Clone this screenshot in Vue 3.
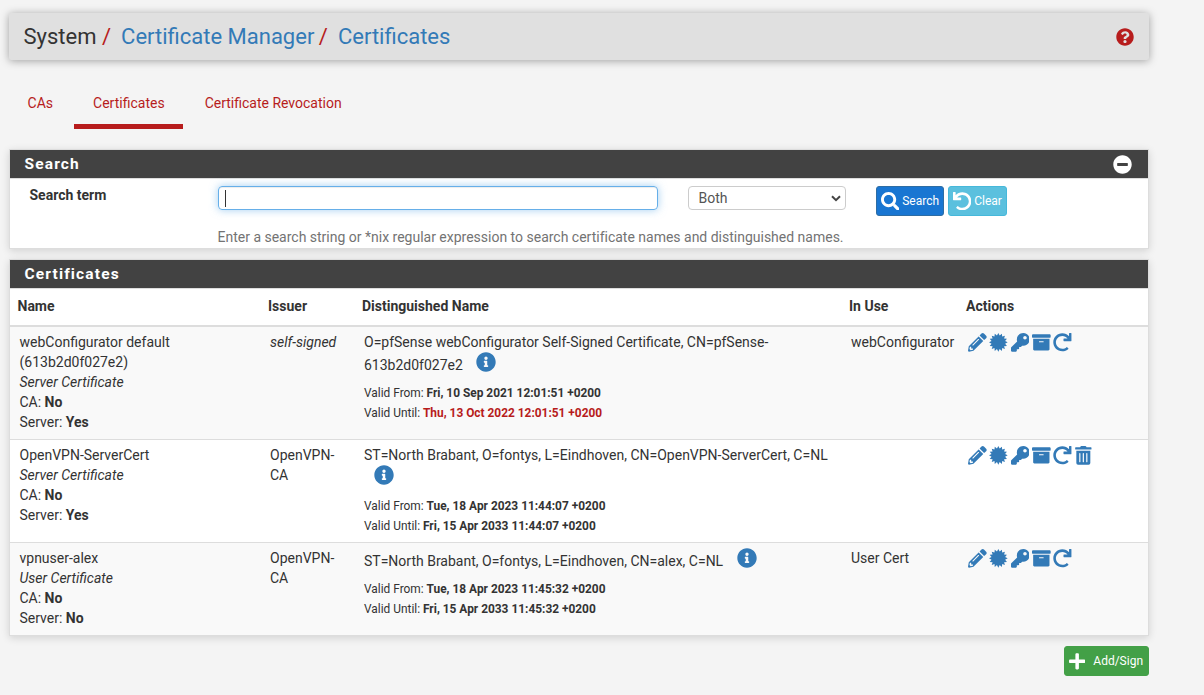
<script setup>
const star = Array.from({ length: 32 }, (_, i) => {
  const r = i % 2 ? 190 : 256
  const a = (i * Math.PI) / 16
  return `${(256 + r * Math.sin(a)).toFixed(1)} ${(256 - r * Math.cos(a)).toFixed(1)}`
}).join('L')

const undo =
  'M212.333 224.333H12c-6.627 0-12-5.373-12-12V12C0 5.373 5.373 0 12 0h48c6.627 0 12 5.373 12 12v78.112C117.773 39.279 184.26 7.47 258.175 8.007c136.906.994 246.448 111.623 246.157 248.532C504.041 393.258 393.12 504 256.333 504c-64.089 0-122.496-24.313-166.51-64.215-5.099-4.622-5.334-12.554-.467-17.42l33.967-33.967c4.474-4.474 11.662-4.717 16.401-.525C170.76 415.336 211.58 432 256.333 432c97.268 0 176-78.716 176-176 0-97.267-78.716-176-176-176-58.496 0-110.28 28.476-142.274 72.333h98.274c6.627 0 12 5.373 12 12v48c0 6.627-5.373 12-12 12z'

const icons = {
  pencil:
    'M497.9 142.1l-46.1 46.1c-4.7 4.7-12.3 4.7-17 0l-111-111c-4.7-4.7-4.7-12.3 0-17l46.1-46.1c18.7-18.7 49.1-18.7 67.9 0l60.1 60.1c18.8 18.7 18.8 49.1 0 67.9zM284.2 99.8L21.6 362.4.4 483.9c-2.9 16.4 11.4 30.6 27.8 27.8l121.5-21.3 262.6-262.6c4.7-4.7 4.7-12.3 0-17l-111-111c-4.8-4.7-12.4-4.7-17.1 0zM124.1 339.9c-5.5-5.5-5.5-14.3 0-19.8l154-154c5.5-5.5 14.3-5.5 19.8 0s5.5 14.3 0 19.8l-154 154c-5.5 5.5-14.3 5.5-19.8 0zM88 424h48v36.3l-64.5 11.3-31.1-31.1L51.7 376H88v48z',
  certificate: `M${star}Z`,
  key: 'M512 176.001C512 273.203 433.202 352 336 352c-11.22 0-22.19-1.062-32.827-3.069l-24.012 27.014A23.999 23.999 0 0 1 261.223 384H224v40c0 13.255-10.745 24-24 24h-40v40c0 13.255-10.745 24-24 24H24c-13.255 0-24-10.745-24-24v-78.059c0-6.365 2.529-12.47 7.029-16.971l161.802-161.802C163.108 213.814 160 195.271 160 176 160 78.798 238.797.001 335.999 0 433.488-.001 512 78.511 512 176.001zM336 128c0 26.51 21.49 48 48 48s48-21.49 48-48-21.49-48-48-48-48 21.49-48 48z',
  archive:
    'M32 448c0 17.7 14.3 32 32 32h384c17.7 0 32-14.3 32-32V160H32v288zm160-212c0-6.6 5.4-12 12-12h104c6.6 0 12 5.4 12 12v8c0 6.6-5.4 12-12 12H204c-6.6 0-12-5.4-12-12v-8zM480 32H32C14.3 32 0 46.3 0 64v48c0 8.8 7.2 16 16 16h480c8.8 0 16-7.2 16-16V64c0-17.7-14.3-32-32-32z',
  redo: undo,
  trash:
    'M64 464a48 48 0 0 0 48 48h288a48 48 0 0 0 48-48V128H64zm272-256a16 16 0 0 1 32 0v224a16 16 0 0 1-32 0zm-96 0a16 16 0 0 1 32 0v224a16 16 0 0 1-32 0zm-96 0a16 16 0 0 1 32 0v224a16 16 0 0 1-32 0zM464 32H344l-9.4-18.7A24 24 0 0 0 313.1 0H198.8a23.72 23.72 0 0 0-21.4 13.3L168 32H48A16 16 0 0 0 32 48v32a16 16 0 0 0 16 16h416a16 16 0 0 0 16-16V48a16 16 0 0 0-16-16z',
}
const info =
  'M256 8C119.043 8 8 119.083 8 256c0 136.997 111.043 248 248 248s248-111.003 248-248C504 119.083 392.957 8 256 8zm0 110c23.196 0 42 18.804 42 42s-18.804 42-42 42-42-18.804-42-42 18.804-42 42-42zm56 254c0 6.627-5.373 12-12 12h-88c-6.627 0-12-5.373-12-12v-24c0-6.627 5.373-12 12-12h12v-64h-12c-6.627 0-12-5.373-12-12v-24c0-6.627 5.373-12 12-12h64c6.627 0 12 5.373 12 12v100h12c6.627 0 12 5.373 12 12v24z'

const base = ['pencil', 'certificate', 'key', 'archive', 'redo']
const rows = [
  {
    name: ['webConfigurator default', '(613b2d0f027e2)'],
    type: 'Server Certificate', server: 'Yes',
    issuer: ['self-signed'], self: true,
    dn: 'O=pfSense webConfigurator Self-Signed Certificate, CN=pfSense-', tail: '613b2d0f027e2',
    from: 'Fri, 10 Sep 2021 12:01:51 +0200', until: 'Thu, 13 Oct 2022 12:01:51 +0200', expired: true,
    use: 'webConfigurator', actions: base,
  },
  {
    name: ['OpenVPN-ServerCert'],
    type: 'Server Certificate', server: 'Yes',
    issuer: ['OpenVPN-', 'CA'],
    dn: 'ST=North Brabant, O=fontys, L=Eindhoven, CN=OpenVPN-ServerCert, C=NL', tail: '',
    from: 'Tue, 18 Apr 2023 11:44:07 +0200', until: 'Fri, 15 Apr 2033 11:44:07 +0200',
    use: '', actions: [...base, 'trash'],
  },
  {
    name: ['vpnuser-alex'],
    type: 'User Certificate', server: 'No',
    issuer: ['OpenVPN-', 'CA'],
    dn: '', tail: 'ST=North Brabant, O=fontys, L=Eindhoven, CN=alex, C=NL',
    from: 'Tue, 18 Apr 2023 11:45:32 +0200', until: 'Fri, 15 Apr 2033 11:45:32 +0200',
    use: 'User Cert', actions: base,
  },
]
</script>

<template>
  <main class="page">
    <header class="crumbs">
      <span>System</span><i class="s1">/</i><a>Certificate Manager</a><i class="s2">/</i><a>Certificates</a>
      <svg class="help" viewBox="0 0 512 512"><path d="M504 256c0 136.997-111.043 248-248 248S8 392.997 8 256C8 119.083 119.043 8 256 8s248 111.083 248 248zM262.655 90c-54.497 0-89.255 22.957-116.549 63.758-3.536 5.286-2.353 12.415 2.715 16.258l34.699 26.31c5.205 3.947 12.621 3.008 16.665-2.122 17.864-22.658 30.113-35.797 57.303-35.797 20.429 0 45.698 13.148 45.698 32.958 0 14.976-12.363 22.667-32.534 33.976C247.128 238.528 216 254.941 216 296v4c0 6.627 5.373 12 12 12h56c6.627 0 12-5.373 12-12v-1.333c0-28.462 83.186-29.647 83.186-106.667 0-58.002-60.165-102-116.531-102zM256 338c-25.365 0-46 20.635-46 46 0 25.364 20.635 46 46 46s46-20.636 46-46c0-25.365-20.635-46-46-46z" /></svg>
    </header>

    <nav class="tabs">
      <a>CAs</a><a class="active">Certificates</a><a>Certificate Revocation</a>
    </nav>

    <section class="panel search">
      <h2>
        Search
        <svg viewBox="0 0 512 512"><path d="M256 8C119 8 8 119 8 256s111 248 248 248 248-111 248-248S393 8 256 8zM124 296c-6.6 0-12-5.4-12-12v-56c0-6.6 5.4-12 12-12h264c6.6 0 12 5.4 12 12v56c0 6.6-5.4 12-12 12H124z" /></svg>
      </h2>
      <div class="form">
        <label>Search term</label>
        <div class="field"><span class="caret"></span></div>
        <div class="select">
          <span>Both</span>
          <svg viewBox="0 0 10 7"><path d="M1 1.2 5 5.2 9 1.2" /></svg>
        </div>
        <button class="btn blue">
          <svg viewBox="0 0 512 512"><path d="M505 442.7L405.3 343c-4.5-4.5-10.6-7-17-7H372c27.6-35.3 44-79.7 44-128C416 93.1 322.9 0 208 0S0 93.1 0 208s93.1 208 208 208c48.3 0 92.7-16.4 128-44v16.3c0 6.4 2.5 12.5 7 17l99.7 99.7c9.4 9.4 24.6 9.4 33.9 0l28.3-28.3c9.4-9.4 9.4-24.6.1-34zM208 336c-70.7 0-128-57.2-128-128 0-70.7 57.2-128 128-128 70.7 0 128 57.2 128 128 0 70.7-57.2 128-128 128z" /></svg>
          <span>Search</span>
        </button>
        <button class="btn cyan">
          <svg viewBox="0 0 512 512"><path :d="undo" /></svg>
          <span>Clear</span>
        </button>
      </div>
      <p class="hint">Enter a search string or *nix regular expression to search certificate names and distinguished names.</p>
    </section>

    <section class="panel list">
      <h2>Certificates</h2>
      <table>
        <colgroup><col class="c1" /><col class="c2" /><col class="c3" /><col class="c4" /><col /></colgroup>
        <thead>
          <tr><th>Name</th><th>Issuer</th><th>Distinguished Name</th><th>In Use</th><th>Actions</th></tr>
        </thead>
        <tbody>
          <tr v-for="(r, i) in rows" :key="i" :class="'r' + i">
            <td>
              <div v-for="n in r.name" :key="n">{{ n }}</div>
              <div><em>{{ r.type }}</em></div>
              <div>CA: <b>No</b></div>
              <div>Server: <b>{{ r.server }}</b></div>
            </td>
            <td :class="{ self: r.self }"><div v-for="n in r.issuer" :key="n">{{ n }}</div></td>
            <td>
              <div v-if="r.dn" class="dn">{{ r.dn }}</div>
              <div class="tail" :class="{ empty: !r.tail }">
                <span v-if="r.tail">{{ r.tail }}</span>
                <svg viewBox="0 0 512 512"><path :d="info" /></svg>
              </div>
              <div class="date">Valid From: <b>{{ r.from }}</b></div>
              <div class="date">Valid Until: <b :class="{ expired: r.expired }">{{ r.until }}</b></div>
            </td>
            <td>{{ r.use }}</td>
            <td>
              <div class="actions">
                <svg v-for="a in r.actions" :key="a" :class="a" viewBox="0 0 512 512"><path :d="icons[a]" /></svg>
              </div>
            </td>
          </tr>
        </tbody>
      </table>
    </section>

    <div class="foot">
      <button class="btn green">
        <svg viewBox="0 0 448 512"><path d="M416 208H272V64c0-17.67-14.33-32-32-32h-32c-17.67 0-32 14.33-32 32v144H32c-17.67 0-32 14.33-32 32v32c0 17.67 14.33 32 32 32h144v144c0 17.67 14.33 32 32 32h32c17.67 0 32-14.33 32-32V304h144c17.67 0 32-14.33 32-32v-32c0-17.67-14.33-32-32-32z" /></svg>
        <span>Add/Sign</span>
      </button>
    </div>
  </main>
</template>

<style>
body { background: #f4f4f4; }
</style>

<style scoped>
* { box-sizing: border-box; }
svg { display: block; flex: none; fill: currentColor; }
.page {
  width: 1204px; height: 695px; padding: 13px 55px 0 9px; overflow: hidden;
  background: #f4f4f4; color: #333;
  font: 14px/20px Roboto, "Liberation Sans", sans-serif;
}
.crumbs {
  height: 47px; padding: 0 15.5px 0 14.5px; display: flex; align-items: center;
  background: #e0e0e0; border-radius: 2px; font-size: 22px; color: #333;
  box-shadow: 0 1px 8px rgba(0, 0, 0, .35);
}
.crumbs a { color: #337ab7; }
.crumbs i { font-style: normal; color: #b71c1c; }
.s1 { margin: 0 10px 0 5.5px; }
.s2 { margin: 0 10px 0 4.5px; }
.help { width: 18px; height: 18px; margin: 1px 0 0 auto; color: #b71c1c; }

.tabs { display: flex; height: 53px; margin-top: 16px; }
.tabs a { padding: 17px 18.5px 0 19px; color: #b71c1c; }
.tabs a:first-child { padding: 17px 21px 0 18.6px; }
.tabs .active { border-bottom: 5px solid #b71c1c; }
.tabs a:last-child { padding-left: 21.5px; }

.panel { background: #fff; border: 1px solid #ddd; box-shadow: 0 2px 8px rgba(0, 0, 0, .14); }
.panel h2 {
  margin: 0; height: 28px; padding: 0 16px 0 14.5px; display: flex; align-items: center;
  justify-content: space-between; background: #424242; color: #fff;
  font-size: 15.5px; font-weight: 700; letter-spacing: 1.15px;
}
.panel h2 svg { width: 19px; height: 19px; }
.search { margin-top: 20px; height: 100px; }
.form { display: flex; align-items: flex-start; padding: 8px 0 0 19.5px; height: 49px; border-top: 1px solid #ddd; }
.form label { width: 188.5px; font-weight: 700; line-height: 16px; }
.field {
  width: 440px; height: 24px; padding: 3px 6px; border: 1px solid #66afe9; border-radius: 4px;
  box-shadow: 0 0 8px rgba(102, 175, 233, .6), inset 0 1px 1px rgba(0, 0, 0, .075);
  margin-top: -1px;
}
.caret { display: block; width: 1px; height: 17px; background: #333; }
.select {
  width: 158px; height: 24px; margin: -1px 30px 0; padding: 0 4px 0 9.5px; border: 1px solid #ccc;
  border-radius: 4px; display: flex; align-items: center; justify-content: space-between; color: #555;
}
.select svg { width: 10px; height: 7px; fill: none; stroke: #444; stroke-width: 2; }
.btn {
  height: 30px; border: 1px solid; border-radius: 3px; padding: 0 0 0 3.5px; display: flex; align-items: center;
  font: 12px/18px Roboto, "Liberation Sans", sans-serif; color: #fff;
}
.form .btn { margin-top: -1px; }
.btn svg { width: 18.7px; height: 18.7px; }
.blue { width: 68px; background: #1976d2; border-color: #2e6da4; }
.blue span, .cyan span { margin-left: 3px; }
.cyan { width: 59px; margin-left: 4px; background: #5bc0de; border-color: #46b8da; }
.hint { margin: 0 0 0 207.5px; color: #737373; line-height: 20px; letter-spacing: -.005px; }

.list { margin-top: 10px; height: 377px; }
table { width: 100%; table-layout: fixed; border-collapse: separate; border-spacing: 0; }
.c1 { width: 250.5px; }
.c2 { width: 94px; }
.c3 { width: 487px; }
.c4 { width: 117px; }
th { height: 39px; padding: 0 7.5px 2px; text-align: left; border-top: 1px solid #ddd; border-bottom: 2px solid #ddd; }
td { padding: 5px 9.5px 0; vertical-align: top; }
.r0 td { height: 112px; }
.r1 td { height: 103px; border-top: 1px solid #ddd; }
.r2 td { height: 93px; border-top: 1px solid #ddd; }
.r0, .r2 { background: #f9f9f9; }
td div { white-space: nowrap; }
.self { font-style: italic; }
.tail { display: flex; align-items: flex-start; height: 31px; }
.tail span { margin: 3px 13.5px 0 0; }
.tail svg { width: 20px; height: 20px; color: #337ab7; }
.tail.empty { padding-left: 10px; }
.date { font-size: 11.9px; }
.expired { color: #b71c1c; }
.actions { display: flex; gap: 2.7px; color: #337ab7; margin-top: 1px; }
.actions svg { width: 18.67px; height: 18.67px; }
.redo { transform: scaleX(-1); }
.actions .trash { margin-left: -1.2px; }
.foot { display: flex; justify-content: flex-end; margin-top: 10px; }
.green { width: 85px; background: #43a047; border-color: #43a047; }
.green svg { width: 16.3px; }
.green span { margin-left: 8.5px; }
</style>
